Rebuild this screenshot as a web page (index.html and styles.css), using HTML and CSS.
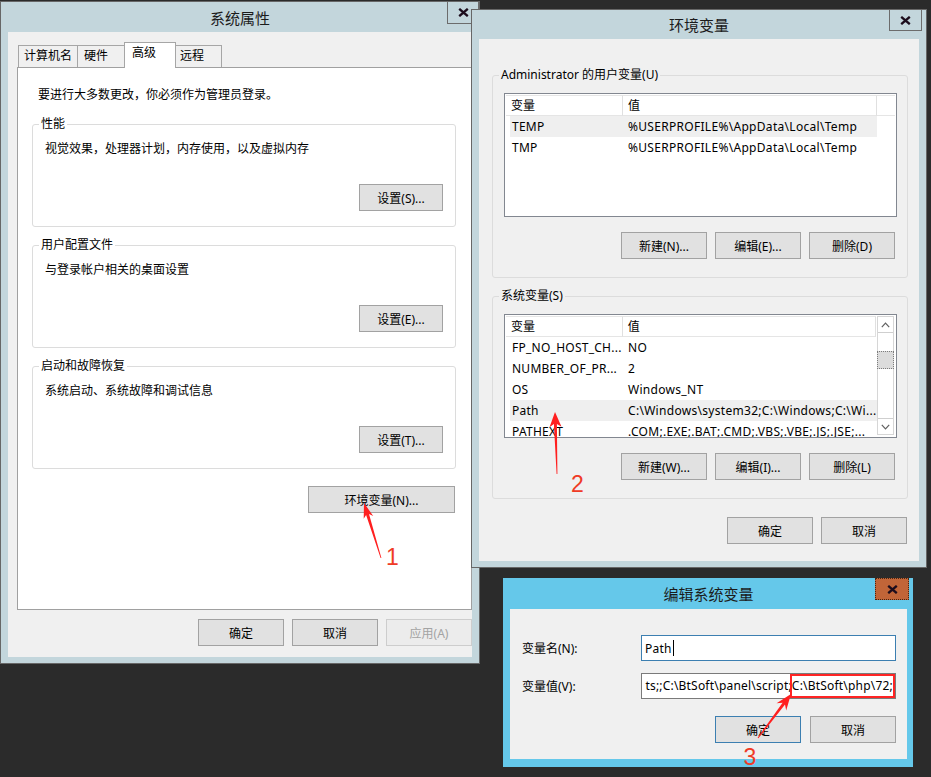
FILE: index.html
```html
<!DOCTYPE html>
<html lang="zh-CN">
<head>
<meta charset="utf-8">
<title>系统属性 - 环境变量</title>
<link rel="stylesheet" href="styles.css">
</head>
<body>
<div class="desk">

  <div class="win w1">
    <div class="tbar">
      <span class="ttl">系统属性</span>
      <span class="close"><svg width="11" height="9" viewBox="0 0 11 9"><path d="M1.2 0.8 L9.8 8.2 M9.8 0.8 L1.2 8.2" stroke="#1c0c1c" stroke-width="2.3" fill="none"/></svg></span>
    </div>
    <div class="client cl1">
      <div class="tabs">
        <div class="tab t1">计算机名</div>
        <div class="tab t2">硬件</div>
        <div class="tab sel">高级</div>
        <div class="tab t4">远程</div>
      </div>
      <div class="panel">
        <p class="intro">要进行大多数更改，你必须作为管理员登录。</p>
        <div class="group">
          <div class="legend">性能</div>
          <p class="desc">视觉效果，处理器计划，内存使用，以及虚拟内存</p>
          <div class="brow"><button class="btn s">设置(S)...</button></div>
        </div>
        <div class="group">
          <div class="legend">用户配置文件</div>
          <p class="desc">与登录帐户相关的桌面设置</p>
          <div class="brow"><button class="btn s">设置(E)...</button></div>
        </div>
        <div class="group">
          <div class="legend">启动和故障恢复</div>
          <p class="desc">系统启动、系统故障和调试信息</p>
          <div class="brow"><button class="btn s">设置(T)...</button></div>
        </div>
        <div class="envrow"><button class="btn env">环境变量(N)...</button></div>
      </div>
      <div class="foot f1">
        <button class="btn">确定</button>
        <button class="btn">取消</button>
        <button class="btn dis">应用(A)</button>
      </div>
    </div>
  </div>

  <div class="win w2">
    <div class="tbar">
      <span class="ttl">环境变量</span>
      <span class="close"><svg width="11" height="9" viewBox="0 0 11 9"><path d="M1.2 0.8 L9.8 8.2 M9.8 0.8 L1.2 8.2" stroke="#1c0c1c" stroke-width="2.3" fill="none"/></svg></span>
    </div>
    <div class="client cl2">
      <div class="group g2">
        <div class="legend">Administrator 的用户变量(U)</div>
        <div class="list">
          <div class="lv">
            <div class="hdr"><div class="hc hc1">变量</div><div class="hc hc2">值</div><div class="hc hc3"></div></div>
            <div class="row hi"><div class="col1">TEMP</div><div class="col2">%USERPROFILE%\AppData\Local\Temp</div></div>
            <div class="row"><div class="col1">TMP</div><div class="col2">%USERPROFILE%\AppData\Local\Temp</div></div>
          </div>
        </div>
        <div class="brow2">
          <button class="btn">新建(N)...</button>
          <button class="btn">编辑(E)...</button>
          <button class="btn">删除(D)</button>
        </div>
      </div>
      <div class="group g2">
        <div class="legend">系统变量(S)</div>
        <div class="list">
          <div class="lv">
            <div class="hdr"><div class="hc hc1">变量</div><div class="hc hc2">值</div></div>
            <div class="row"><div class="col1">FP_NO_HOST_CH...</div><div class="col2">NO</div></div>
            <div class="row"><div class="col1">NUMBER_OF_PR...</div><div class="col2">2</div></div>
            <div class="row"><div class="col1">OS</div><div class="col2">Windows_NT</div></div>
            <div class="row hi"><div class="col1">Path</div><div class="col2">C:\Windows\system32;C:\Windows;C:\Wi...</div></div>
            <div class="row"><div class="col1">PATHEXT</div><div class="col2">.COM;.EXE;.BAT;.CMD;.VBS;.VBE;.JS;.JSE;...</div></div>
          </div>
          <div class="sb">
            <div class="sbb up"><svg width="9" height="6" viewBox="0 0 9 6"><path d="M0.8 5.2 L4.5 1.2 L8.2 5.2" stroke="#606060" stroke-width="1.2" fill="none"/></svg></div>
            <div class="thumb"></div>
            <div class="sbsp"></div>
            <div class="sbb dn"><svg width="9" height="6" viewBox="0 0 9 6"><path d="M0.8 0.8 L4.5 4.8 L8.2 0.8" stroke="#606060" stroke-width="1.2" fill="none"/></svg></div>
          </div>
        </div>
        <div class="brow2">
          <button class="btn">新建(W)...</button>
          <button class="btn">编辑(I)...</button>
          <button class="btn">删除(L)</button>
        </div>
      </div>
      <div class="foot f2">
        <button class="btn">确定</button>
        <button class="btn">取消</button>
      </div>
    </div>
  </div>

  <div class="win w3">
    <div class="tbar">
      <span class="ttl">编辑系统变量</span>
      <span class="close"><svg width="11" height="9" viewBox="0 0 11 9"><path d="M1.2 0.8 L9.8 8.2 M9.8 0.8 L1.2 8.2" stroke="#1c0c1c" stroke-width="2.3" fill="none"/></svg></span>
    </div>
    <div class="client cl3">
      <div class="frow">
        <span class="flabel">变量名(N):</span>
        <div class="inp focus">Path<span class="caret"></span></div>
      </div>
      <div class="frow">
        <span class="flabel">变量值(V):</span>
        <div class="inp end"><span class="val">ts;;C:\BtSoft\panel\script;<span class="hl">C:\BtSoft\php\72;</span></span></div>
      </div>
      <div class="foot f3">
        <button class="btn def">确定</button>
        <button class="btn">取消</button>
      </div>
    </div>
  </div>

  <svg class="marks" width="931" height="777" viewBox="0 0 931 777">
    <polygon fill="#ff1f1f" points="364,503 373.2,515.9 369,514 381.4,557.9 380.6,558.1 366.1,514.9 363.7,518.8"/>
    <polygon fill="#ff1f1f" points="555,412 561.5,426.8 556.9,424 557.4,474 556.6,474 553.9,424 549.5,427.2"/>
    <polygon fill="#ff1f1f" points="791,694 786.2,710.4 785,704.5 758.4,738.3 757.6,737.7 782.6,702.7 776.6,703.2"/>
    <text class="num" x="392.5" y="565">1</text>
    <text class="num" x="577.5" y="492">2</text>
    <text class="num" x="750" y="765">3</text>
  </svg>
</div>
</body>
</html>
```

FILE: styles.css
```css
* { box-sizing: border-box; }

body {
  margin: 0;
  background: #2b2b2b;
  font-family: "Noto Sans", "Noto Sans CJK SC", sans-serif;
  font-size: 12px;
  color: #000;
}

p { margin: 0; }

.desk {
  position: relative;
  width: 931px;
  height: 777px;
  overflow: hidden;
}

/* ---------- windows ---------- */
.win {
  position: absolute;
  display: flex;
  flex-direction: column;
  background: #c3d6dc;
  border: 1px solid #676767;
}
.w1 { left: 0; top: 1px; width: 480px; height: 663px; padding: 0 7px 6px; }
.w2 { left: 471px; top: 9px; width: 456px; height: 559px; padding: 0 7px 6px; }
.w3 { left: 503px; top: 578px; width: 410px; height: 189px; padding: 0 6px 8px 7px; background: #65c8ea; border: none; }

.tbar {
  position: relative;
  flex: none;
  display: flex;
  align-items: center;
  justify-content: center;
  font-family: "Noto Sans CJK SC", sans-serif;
  font-size: 15px;
  color: #1b1b1b;
}
.w1 .tbar { height: 30px; }
.w2 .tbar { height: 29px; }
.w3 .tbar { height: 31px; }

.close {
  position: absolute;
  top: 0;
  display: flex;
  align-items: center;
  justify-content: center;
  border: 1px solid #6c6c6c;
  border-top: none;
}
.close svg { display: block; }
.w1 .close { left: 439px; width: 32px; height: 22px; }
.w2 .close { left: 410px; width: 33px; height: 21px; }
.w3 .close { left: 365px; width: 34px; height: 22px; background: #c16538; border: 1px dotted #4a2410; }

.client { flex: 1; background: #f0f0f0; }
.cl1 { padding: 10px 0 0 9px; }
.cl2 { padding: 36px 11px 0 13px; }
.cl3 { padding: 26px 11px 0 12px; }

/* ---------- buttons ---------- */
.btn {
  width: 86px;
  height: 27px;
  padding: 0;
  border: 1px solid #a2a2a2;
  background: #e1e1e1;
  font: inherit;
  color: #000;
  display: flex;
  align-items: center;
  justify-content: center;
  white-space: nowrap;
}
.btn.s { width: 84px; }
.btn.env { width: 147px; }
.btn.dis { background: #ececec; border-color: #cdcdcd; color: #a3a3a3; }
.btn.def { border-color: #3c7fb1; }

.foot { display: flex; justify-content: flex-end; gap: 8px; }
.f1 { margin-top: 9px; }
.f2 { margin-top: 18px; padding-right: 1px; }
.f3 { margin-top: 17px; gap: 9px; }

/* ---------- tabs ---------- */
.tabs {
  display: flex;
  align-items: flex-end;
  height: 25px;
  padding-left: 1px;
}
.tab {
  height: 22px;
  border: 1px solid #a6a6a6;
  border-bottom: none;
  background: #f0f0f0;
  padding-left: 6px;
  line-height: 20px;
  white-space: nowrap;
}
.t1 { width: 60px; padding-left: 5px; }
.t2 { width: 48px; margin-left: -1px; }
.tab.sel {
  position: relative;
  z-index: 1;
  width: 52px;
  height: 26px;
  margin-left: -1px;
  margin-bottom: -1px;
  background: #fff;
  padding-left: 7px;
}
.t4 { width: 47px; margin-left: -1px; padding-left: 4px; }

.panel {
  height: 543px;
  background: #fff;
  border: 1px solid #a0a0a0;
  padding-top: 19px;
}
.intro { margin-left: 20px; line-height: 16px; }

/* ---------- group boxes ---------- */
.group {
  border: 1px solid #dcdcdc;
  border-radius: 3px;
}
.panel .group { width: 424px; margin: 21px 0 0 14px; padding-bottom: 15px; }
.panel .group + .group { margin-top: 18px; }
.legend {
  width: fit-content;
  margin: -9px 0 0 6px;
  padding: 0 2px;
  line-height: 16px;
  background: #fff;
  white-space: nowrap;
}
.desc { margin: 9px 0 0 12px; line-height: 16px; }
.brow { display: flex; justify-content: flex-end; margin-top: 27px; padding-right: 12px; }
.envrow { display: flex; justify-content: flex-end; margin-top: 17px; padding-right: 16px; }

.g2 { padding-bottom: 18px; }
.g2 .legend { background: #f0f0f0; }
.g2 + .g2 { margin-top: 18px; }
.brow2 { display: flex; justify-content: flex-end; gap: 8px; margin-top: 15px; padding-right: 12px; }

/* ---------- list views ---------- */
.list {
  display: flex;
  height: 124px;
  margin: 10px 10px 0 11px;
  border: 1px solid #828790;
  background: #fff;
  overflow: hidden;
}
.lv { flex: 1; min-width: 0; }
.hdr {
  display: flex;
  height: 21px;
  margin: 1px 1px 0 1px;
  line-height: 19px;
}
.hc {
  border-top: 1px solid #e5e5e5;
  border-bottom: 1px solid #e5e5e5;
  border-right: 1px solid #e0e0e0;
  white-space: nowrap;
}
.hc1 { width: 117px; padding-left: 5px; }
.hc2 { width: 254px; padding-left: 5px; }
.hc3 { flex: 1; border-right: none; }

.row {
  display: flex;
  width: 367px;
  height: 21px;
  margin-left: 5px;
  line-height: 21px;
  white-space: nowrap;
}
.row.hi { background: #efefef; }
.col1 { width: 113px; flex: none; padding-left: 2px; overflow: hidden; letter-spacing: 0.25px; }
.col2 { flex: 1; min-width: 0; padding-left: 5px; overflow: hidden; letter-spacing: 0.3px; }

.sb {
  flex: none;
  width: 17px;
  margin: 1px 2px 2px 0;
  border: 1px solid #d6d6d6;
  display: flex;
  flex-direction: column;
}
.sbb {
  height: 16px;
  flex: none;
  display: flex;
  align-items: center;
  justify-content: center;
  background: #fff;
}
.sbb svg { display: block; }
.up { border-bottom: 1px solid #cfcfcf; }
.dn { border-top: 1px solid #cfcfcf; }
.thumb {
  height: 18px;
  flex: none;
  margin: 18px -1px 0;
  background: #dcdcdc;
  border: 1px dotted #7c7c7c;
}
.sbsp { flex: 1; }

/* ---------- edit dialog ---------- */
.frow { display: flex; align-items: center; height: 26px; }
.frow + .frow { margin-top: 12px; }
.flabel { width: 119px; flex: none; }
.inp {
  flex: 1;
  height: 26px;
  display: flex;
  align-items: center;
  padding: 0 3px;
  border: 1px solid #7a7a7a;
  background: #fff;
  overflow: hidden;
  white-space: nowrap;
  letter-spacing: 0.2px;
}
.inp.focus { border-color: #3c7fb1; }
.inp.end { justify-content: flex-end; padding: 0 2px 0 3px; }
.val { flex: none; }
.caret { display: inline-block; width: 1px; height: 16px; margin-left: 1px; background: #000; }
.hl {
  display: inline-block;
  line-height: 20px;
  outline: 2px solid #ff2424;
}

/* ---------- annotations ---------- */
.marks {
  position: absolute;
  left: 0;
  top: 0;
  pointer-events: none;
}
.num {
  font-family: "Liberation Sans", sans-serif;
  font-size: 23px;
  fill: #ef3b26;
  text-anchor: middle;
}
```
